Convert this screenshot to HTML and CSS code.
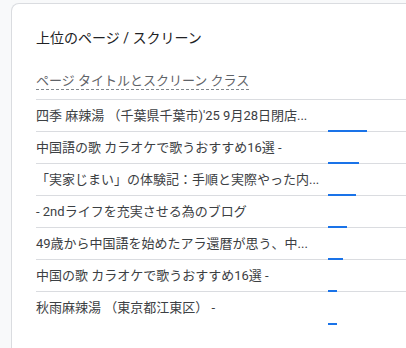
FILE: index.html
```html
<!DOCTYPE html>
<html lang="ja">
<head>
    <meta charset="UTF-8">
    <meta name="viewport" content="width=device-width, initial-scale=1.0">
    <title>上位のページ / スクリーン</title>
    <link rel="stylesheet" href="styles.css">
</head>
<body>

    <div class="card">
        <h2 class="card-title">上位のページ / スクリーン</h2>

        <div class="table">
            <div class="table-head">
                <span class="head-label">ページ タイトルとスクリーン クラス</span>
            </div>

            <div class="row">
                <div class="row-name">四季 麻辣湯 （千葉県千葉市)'25 9月28日閉店...</div>
                <div class="row-bar"><span class="bar" style="width: 39px"></span></div>
            </div>
            <div class="row">
                <div class="row-name">中国語の歌 カラオケで歌うおすすめ16選 -</div>
                <div class="row-bar"><span class="bar" style="width: 31px"></span></div>
            </div>
            <div class="row">
                <div class="row-name">「実家じまい」の体験記：手順と実際やった内...</div>
                <div class="row-bar"><span class="bar" style="width: 28px"></span></div>
            </div>
            <div class="row">
                <div class="row-name">- 2ndライフを充実させる為のブログ</div>
                <div class="row-bar"><span class="bar" style="width: 19px"></span></div>
            </div>
            <div class="row">
                <div class="row-name">49歳から中国語を始めたアラ還暦が思う、中...</div>
                <div class="row-bar"><span class="bar" style="width: 15px"></span></div>
            </div>
            <div class="row">
                <div class="row-name">中国の歌 カラオケで歌うおすすめ16選 -</div>
                <div class="row-bar"><span class="bar" style="width: 9px"></span></div>
            </div>
            <div class="row">
                <div class="row-name">秋雨麻辣湯 （東京都江東区） -</div>
                <div class="row-bar"><span class="bar" style="width: 9px"></span></div>
            </div>
        </div>
    </div>

</body>
</html>
```

FILE: styles.css
```css
* {
    margin: 0;
    padding: 0;
    box-sizing: border-box;
}
html, body {
    overflow: hidden;
    height: 100%;
}
body {
    background: #f8f9fa;
    font-family: Roboto, "Noto Sans CJK JP", sans-serif;
    color: #3c4043;
    padding: 3px 0 0 11px;
}
.card {
    height: 100%;
    margin-right: -30px;
    background: #fff;
    border: 1px solid #dadce0;
    border-bottom: none;
    border-radius: 8px 8px 0 0;
    padding: 24px 0 0 24px;
}
.card-title {
    font-size: 14px;
    font-weight: 400;
    line-height: 20px;
    color: #202124;
}
.table {
    margin-top: 25px;
}
.table-head {
    display: flex;
    padding-bottom: 9px;
    border-bottom: 1px solid #dadce0;
}
.head-label {
    font-size: 13px;
    line-height: 16px;
    color: #5f6368;
    border-bottom: 1px dashed #80868b;
}
.row {
    display: flex;
    height: 32px;
    border-bottom: 1px solid #dadce0;
}
.row:last-child {
    border-bottom: none;
}
.row-name {
    width: 286px;
    font-size: 13px;
    line-height: 31px;
    white-space: nowrap;
}
.row-bar {
    display: flex;
    align-items: flex-end;
    padding-left: 6px;
    margin-bottom: -1px;
}
.bar {
    display: block;
    height: 2px;
    background: #1a73e8;
}
```
